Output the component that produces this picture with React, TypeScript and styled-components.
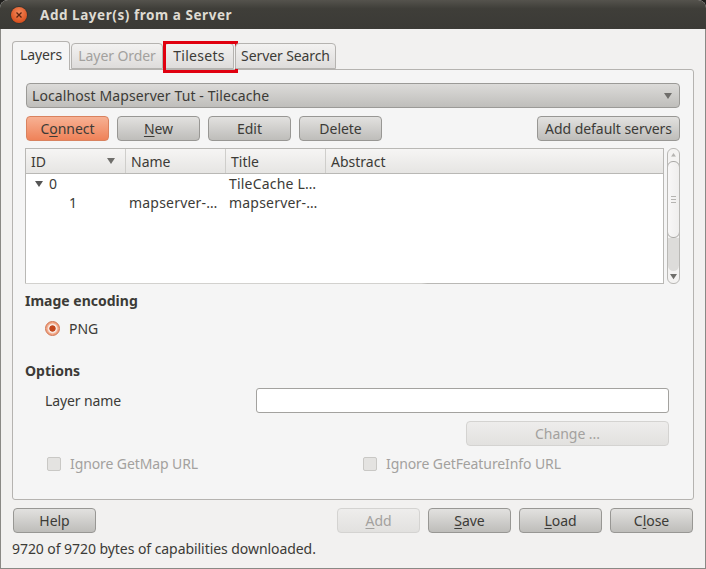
import React from "react";
import styled, { createGlobalStyle } from "styled-components";

const GlobalStyle = createGlobalStyle`
  html, body {
    margin: 0;
    padding: 0;
    background: #1f1e1c;
  }
  body {
    font-family: "Noto Sans", "Open Sans", sans-serif;
    font-size: 14px;
    color: #3c3b37;
  }
`;

const Window = styled.div`
  width: 706px;
  height: 569px;
  box-sizing: border-box;
  display: flex;
  flex-direction: column;
  overflow: hidden;
  border-radius: 8px 8px 0 0;
  background: #f2f1f0;
`;

const TitleBar = styled.div`
  height: 29px;
  flex: none;
  display: flex;
  align-items: center;
  gap: 13px;
  padding: 0 0 0 11px;
  box-sizing: border-box;
  background: linear-gradient(#55534d, #3f3e39 30%, #3b3a36);
`;

const CloseDot = styled.div`
  width: 16px;
  height: 16px;
  border-radius: 50%;
  background: radial-gradient(circle at 50% 35%, #f58a5c, #d9501e 75%);
  box-shadow: 0 0 0 1px #37352f;
  display: flex;
  align-items: center;
  justify-content: center;
`;

const Title = styled.div`
  font-weight: 700;
  font-size: 13.5px;
  letter-spacing: 0.55px;
  color: #dfdbd2;
`;

const Body = styled.div`
  flex: 1;
  display: flex;
  flex-direction: column;
  padding: 12px 11px 0 11px;
  border-left: 1px solid #8a8985;
  border-right: 1px solid #8a8985;
  border-bottom: 1px solid #8a8985;
  box-sizing: border-box;
`;

const TabBar = styled.div`
  display: flex;
  align-items: flex-end;
  height: 28px;
  position: relative;
  z-index: 1;
`;

const Tab = styled.div<{ $w: number; $active?: boolean; $muted?: boolean; $ls?: number }>`
  position: relative;
  width: ${(p) => p.$w}px;
  height: ${(p) => (p.$active ? 29 : 26)}px;
  margin-right: 1px;
  margin-bottom: ${(p) => (p.$active ? -1 : 0)}px;
  padding-bottom: ${(p) => (p.$active ? 3 : 2)}px;
  box-sizing: border-box;
  display: flex;
  align-items: center;
  justify-content: center;
  border: 1px solid #b5b3b0;
  border-bottom: ${(p) => (p.$active ? "none" : "1px solid #b5b3b0")};
  border-radius: 4px 4px 0 0;
  background: ${(p) =>
    p.$active ? "#f5f5f5" : "linear-gradient(#f3f2f1, #dedcdb)"};
  color: ${(p) => (p.$muted ? "#a3a19e" : "#3c3b37")};
  font-size: 14px;
  letter-spacing: ${(p) => p.$ls ?? -0.1}px;
  white-space: nowrap;
`;

const Highlight = styled.div`
  position: absolute;
  left: -2px;
  top: -3px;
  width: 75px;
  height: 32px;
  box-sizing: border-box;
  border: 3px solid #e0000f;
  pointer-events: none;
`;

const Pane = styled.div`
  height: 431px;
  box-sizing: border-box;
  flex: none;
  border: 1px solid #b5b3b0;
  border-radius: 0 3px 3px 3px;
  background: #f5f5f5;
  padding: 13px 13px 0 12px;
  display: flex;
  flex-direction: column;
`;

const Combo = styled.div`
  height: 25px;
  margin-left: 1px;
  box-sizing: border-box;
  display: flex;
  align-items: center;
  justify-content: space-between;
  padding: 0 7px 0 5px;
  border: 1px solid #9b9a97;
  border-radius: 4px;
  background: linear-gradient(#dcdbd9, #bfbebb);
  font-size: 14px;
  letter-spacing: 0.1px;
`;

const Toolbar = styled.div`
  display: flex;
  gap: 8px;
  margin: 8px 0 0 1px;
`;

const Spacer = styled.div`
  flex: 1;
`;

const Button = styled.div<{ $w?: number; $accent?: boolean; $off?: boolean }>`
  width: ${(p) => p.$w ?? 83}px;
  height: 25px;
  flex: none;
  box-sizing: border-box;
  display: flex;
  align-items: center;
  justify-content: center;
  border-radius: 4px;
  border: 1px solid
    ${(p) => (p.$accent ? "#d9825f" : p.$off ? "#d4d3d1" : "#989794")};
  background: ${(p) =>
    p.$accent
      ? "linear-gradient(#f7b193, #ef8259)"
      : p.$off
        ? "linear-gradient(#eeedec, #e2e1df)"
        : "linear-gradient(#e2e1df, #bebdba)"};
  color: ${(p) => (p.$off ? "#a3a19e" : "#3c3b37")};
  font-size: 14px;
  letter-spacing: -0.05px;
  white-space: nowrap;
`;

const Key = styled.span`
  text-decoration: underline;
  text-underline-offset: 2px;
`;

const TreeRow = styled.div`
  display: flex;
  height: 136px;
  margin-top: 7px;
`;

const Tree = styled.div`
  width: 640px;
  box-sizing: border-box;
  border: 1px solid #b9b8b5;
  border-bottom: none;
  background: #fff;
  display: flex;
  flex-direction: column;
`;

const HeaderRow = styled.div`
  height: 24px;
  flex: none;
  display: grid;
  grid-template-columns: 100px 100px 100px 1fr;
  border-bottom: 1px solid #b9b8b5;
  background: linear-gradient(#f6f5f4, #e6e5e3);
`;

const HeaderCell = styled.div`
  display: flex;
  align-items: center;
  justify-content: space-between;
  padding: 0 10px 0 5px;
  border-right: 1px solid #cfcecb;
  font-size: 14px;

  &:last-child {
    border-right: none;
  }
`;

const Rows = styled.div`
  flex: 1;
`;

const Row = styled.div`
  height: 19px;
  display: grid;
  grid-template-columns: 100px 100px 100px 1fr;
  align-items: center;
  font-size: 14px;
`;

const Cell = styled.div`
  padding-left: 3px;
  letter-spacing: 0.2px;
  white-space: nowrap;
`;

const IdCell = styled.div<{ $indent: number }>`
  display: flex;
  align-items: center;
  gap: 6px;
  padding-left: ${(p) => p.$indent}px;
`;

const BottomEdge = styled.div`
  height: 1px;
  flex: none;
  margin: 0 -1px;
  background: linear-gradient(90deg, #d2d1ce 62%, #b9b8b5 63%);
`;

const ScrollBar = styled.div`
  width: 13px;
  margin-left: 3px;
  box-sizing: border-box;
  border: 1px solid #b9b8b5;
  border-radius: 6px;
  display: flex;
  flex-direction: column;
  align-items: center;
  background: #f4f3f2;
  overflow: hidden;
`;

const ScrollEnd = styled.div<{ $h: number }>`
  height: ${(p) => p.$h}px;
  flex: none;
  display: flex;
  align-items: center;
  justify-content: center;
`;

const Thumb = styled.div`
  height: 77px;
  width: 13px;
  flex: none;
  box-sizing: border-box;
  border: 1px solid #aaa9a6;
  border-radius: 6px;
  background: linear-gradient(90deg, #f8f7f7, #efeeed);
  display: flex;
  flex-direction: column;
  align-items: center;
  justify-content: center;
  gap: 2px;
`;

const Grip = styled.div`
  width: 5px;
  height: 1px;
  background: #b5b4b1;
`;

const Trough = styled.div`
  flex: 1;
  width: 100%;
  background: #dddcda;
  border-radius: 0 0 6px 6px;
`;

const SectionTitle = styled.div<{ $top: number }>`
  margin-top: ${(p) => p.$top}px;
  height: 19px;
  line-height: 17px;
  font-weight: 700;
  font-size: 14px;
`;

const RadioRow = styled.div`
  display: flex;
  align-items: center;
  gap: 9px;
  margin: 8px 0 0 20px;
  height: 19px;
`;

const Radio = styled.div`
  width: 15px;
  height: 15px;
  box-sizing: border-box;
  border-radius: 50%;
  border: 1px solid #d0734f;
  background: radial-gradient(circle, #c2461c 0 2.8px, #f6e6de 3.5px 4.2px, #f2a584 5.5px);
`;

const FormRow = styled.div`
  display: flex;
  align-items: center;
  margin: 7px 0 0 20px;
  height: 25px;
`;

const FieldLabel = styled.div`
  width: 211px;
  flex: none;
  letter-spacing: -0.1px;
`;

const TextField = styled.div`
  width: 413px;
  height: 25px;
  box-sizing: border-box;
  border: 1px solid #a3a29f;
  border-radius: 3px;
  background: #fff;
`;

const ChangeRow = styled.div`
  display: flex;
  justify-content: flex-end;
  margin: 8px 11px 0 0;
`;

const ChecksRow = styled.div`
  display: grid;
  grid-template-columns: 316px 1fr;
  margin: 8px 0 0 22px;
`;

const CheckItem = styled.div`
  display: flex;
  align-items: center;
  gap: 9px;
  color: #a3a19e;
  height: 19px;
  letter-spacing: -0.1px;
`;

const CheckBox = styled.div`
  width: 14px;
  height: 14px;
  box-sizing: border-box;
  border: 1px solid #c9c8c5;
  border-radius: 2px;
  background: #e4e3e1;
`;

const FooterBar = styled.div`
  display: flex;
  gap: 8px;
  margin: 8px 0 0 1px;
`;

const FooterGap = styled.div`
  width: 225px;
  flex: none;
`;

const Status = styled.div`
  margin: 6px 0 0 0;
  font-size: 14px;
  letter-spacing: -0.06px;
  white-space: nowrap;
`;

const Arrow = ({ size = 8, color = "#6f6e6b", up = false }: { size?: number; color?: string; up?: boolean }) => (
  <svg width={size} height={size * 0.75} viewBox="0 0 8 6" style={up ? { transform: "rotate(180deg)" } : undefined}>
    <path d="M0 0h8L4 6z" fill={color} />
  </svg>
);

const App = () => (
  <Window>
    <GlobalStyle />
    <TitleBar>
      <CloseDot>
        <svg width="8" height="8" viewBox="0 0 8 8">
          <path d="M1.5 1.5l5 5M6.5 1.5l-5 5" stroke="#5a2410" strokeWidth="1.3" />
        </svg>
      </CloseDot>
      <Title>Add Layer(s) from a Server</Title>
    </TitleBar>
    <Body>
      <TabBar>
        <Tab $w={58} $active>Layers</Tab>
        <Tab $w={92} $muted>Layer Order</Tab>
        <Tab $w={70} $ls={0.3}>
          Tilesets
          <Highlight />
        </Tab>
        <Tab $w={101}>Server Search</Tab>
      </TabBar>
      <Pane>
        <Combo>
          Localhost Mapserver Tut - Tilecache
          <Arrow />
        </Combo>
        <Toolbar>
          <Button $accent>C<Key>o</Key>nnect</Button>
          <Button><Key>N</Key>ew</Button>
          <Button>Edit</Button>
          <Button>Delete</Button>
          <Spacer />
          <Button $w={143}>Add default servers</Button>
        </Toolbar>
        <TreeRow>
          <Tree>
            <HeaderRow>
              <HeaderCell>ID <Arrow /></HeaderCell>
              <HeaderCell>Name</HeaderCell>
              <HeaderCell>Title</HeaderCell>
              <HeaderCell>Abstract</HeaderCell>
            </HeaderRow>
            <Rows>
              <Row>
                <IdCell $indent={9}><Arrow color="#555" /> 0</IdCell>
                <Cell />
                <Cell>TileCache L…</Cell>
                <Cell />
              </Row>
              <Row>
                <IdCell $indent={43}>1</IdCell>
                <Cell>mapserver-…</Cell>
                <Cell>mapserver-…</Cell>
                <Cell />
              </Row>
            </Rows>
            <BottomEdge />
          </Tree>
          <ScrollBar>
            <ScrollEnd $h={12}><Arrow size={5} color="#b5b4b1" up /></ScrollEnd>
            <Thumb><Grip /><Grip /><Grip /></Thumb>
            <Trough />
            <ScrollEnd $h={12}><Arrow size={7} color="#6f6e6b" /></ScrollEnd>
          </ScrollBar>
        </TreeRow>
        <SectionTitle $top={8}>Image encoding</SectionTitle>
        <RadioRow><Radio />PNG</RadioRow>
        <SectionTitle $top={24}>Options</SectionTitle>
        <FormRow>
          <FieldLabel>Layer name</FieldLabel>
          <TextField />
        </FormRow>
        <ChangeRow><Button $w={203} $off>Change ...</Button></ChangeRow>
        <ChecksRow>
          <CheckItem><CheckBox />Ignore GetMap URL</CheckItem>
          <CheckItem><CheckBox />Ignore GetFeatureInfo URL</CheckItem>
        </ChecksRow>
      </Pane>
      <FooterBar>
        <Button>Help</Button>
        <FooterGap />
        <Button $off><Key>A</Key>dd</Button>
        <Button><Key>S</Key>ave</Button>
        <Button><Key>L</Key>oad</Button>
        <Button>C<Key>l</Key>ose</Button>
      </FooterBar>
      <Status>9720 of 9720 bytes of capabilities downloaded.</Status>
    </Body>
  </Window>
);

export default App;
